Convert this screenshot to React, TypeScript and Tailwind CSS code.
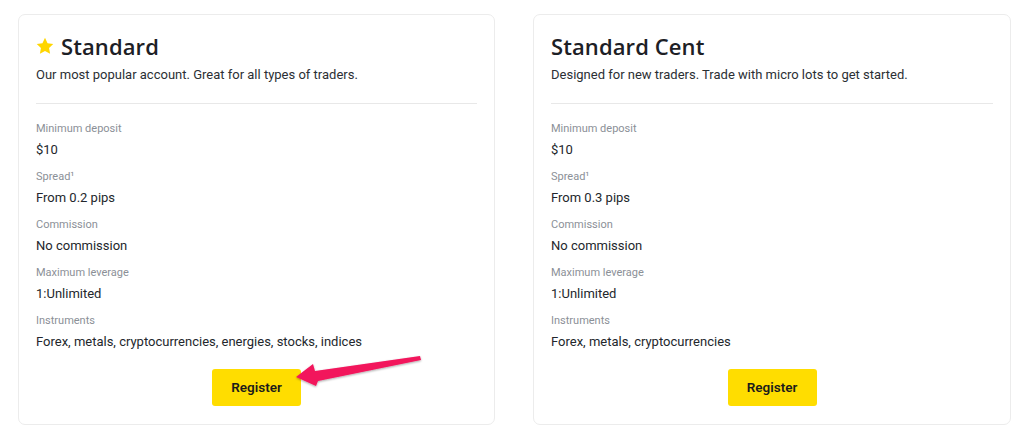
import React from "react";

type Row = { label: React.ReactNode; value: string };

const Star = () => (
  <svg width="18" height="18" viewBox="0 0 24 24" className="shrink-0">
    <path
      d="M12 1l3.4 7.2 7.6 1-5.6 5.3 1.4 7.7L12 18.5 5.2 22.2l1.4-7.7L1 9.2l7.6-1z"
      fill="#ffd600"
    />
  </svg>
);

function Card({
  title,
  star,
  desc,
  rows,
}: {
  title: string;
  star?: boolean;
  desc: string;
  rows: Row[];
}) {
  return (
    <div className="flex flex-col rounded-[7px] border border-[#ececec] bg-white px-[17px] pt-[15px] h-[411px]">
      <div className="flex items-center gap-[7px] h-[32px]">
        {star && <Star />}
        <h2
          className="text-[22px] font-semibold text-[#1d2025] tracking-[0.1px]"
          style={{ fontFamily: "'Open Sans', 'Noto Sans', sans-serif" }}
        >
          {title}
        </h2>
      </div>
      <p className="mt-[4px] text-[13px] leading-[18px] text-[#2b2f34]">{desc}</p>
      <div className="mt-[19px] border-t border-[#e8e8e8]" />
      <div className="mt-[17px] flex flex-col gap-[10px]">
        {rows.map((r, i) => (
          <div key={i} className="flex flex-col">
            <div className="text-[11px] leading-[16px] text-[#8b9097]">{r.label}</div>
            <div className="mt-[4px] text-[13px] leading-[18px] text-[#23272c]">{r.value}</div>
          </div>
        ))}
      </div>
      <div className="mt-[18px] flex justify-center">
        <button className="h-[37px] w-[89px] rounded-[3px] bg-[#ffdd00] text-[13.5px] font-semibold text-[#1b1b1b]">
          Register
        </button>
      </div>
    </div>
  );
}

export default function App() {
  return (
    <div
      className="relative h-[439px] w-[1024px] bg-white pt-[14px] pl-[18px]"
      style={{ fontFamily: "Roboto, 'Liberation Sans', sans-serif" }}
    >
      <div className="flex gap-[38px]">
        <div className="w-[477px]">
          <Card
            title="Standard"
            star
            desc="Our most popular account. Great for all types of traders."
            rows={[
              { label: "Minimum deposit", value: "$10" },
              { label: "Spread¹", value: "From 0.2 pips" },
              { label: "Commission", value: "No commission" },
              { label: "Maximum leverage", value: "1:Unlimited" },
              { label: "Instruments", value: "Forex, metals, cryptocurrencies, energies, stocks, indices" },
            ]}
          />
        </div>
        <div className="w-[478px]">
          <Card
            title="Standard Cent"
            desc="Designed for new traders. Trade with micro lots to get started."
            rows={[
              { label: "Minimum deposit", value: "$10" },
              { label: "Spread¹", value: "From 0.3 pips" },
              { label: "Commission", value: "No commission" },
              { label: "Maximum leverage", value: "1:Unlimited" },
              { label: "Instruments", value: "Forex, metals, cryptocurrencies" },
            ]}
          />
        </div>
      </div>
      <svg
        className="absolute left-0 top-0 pointer-events-none"
        width="1024"
        height="439"
        viewBox="0 0 1024 439"
      >
        <defs>
          <filter id="sh" x="-20%" y="-50%" width="140%" height="200%">
            <feDropShadow dx="0" dy="1" stdDeviation="1.2" floodColor="#000" floodOpacity="0.35" />
          </filter>
        </defs>
        <path
          d="M296 377 L313 364 L315 371 L420 356 L421 360 L318 381 L316 386 Z"
          fill="#f2145c"
          filter="url(#sh)"
        />
      </svg>
    </div>
  );
}
